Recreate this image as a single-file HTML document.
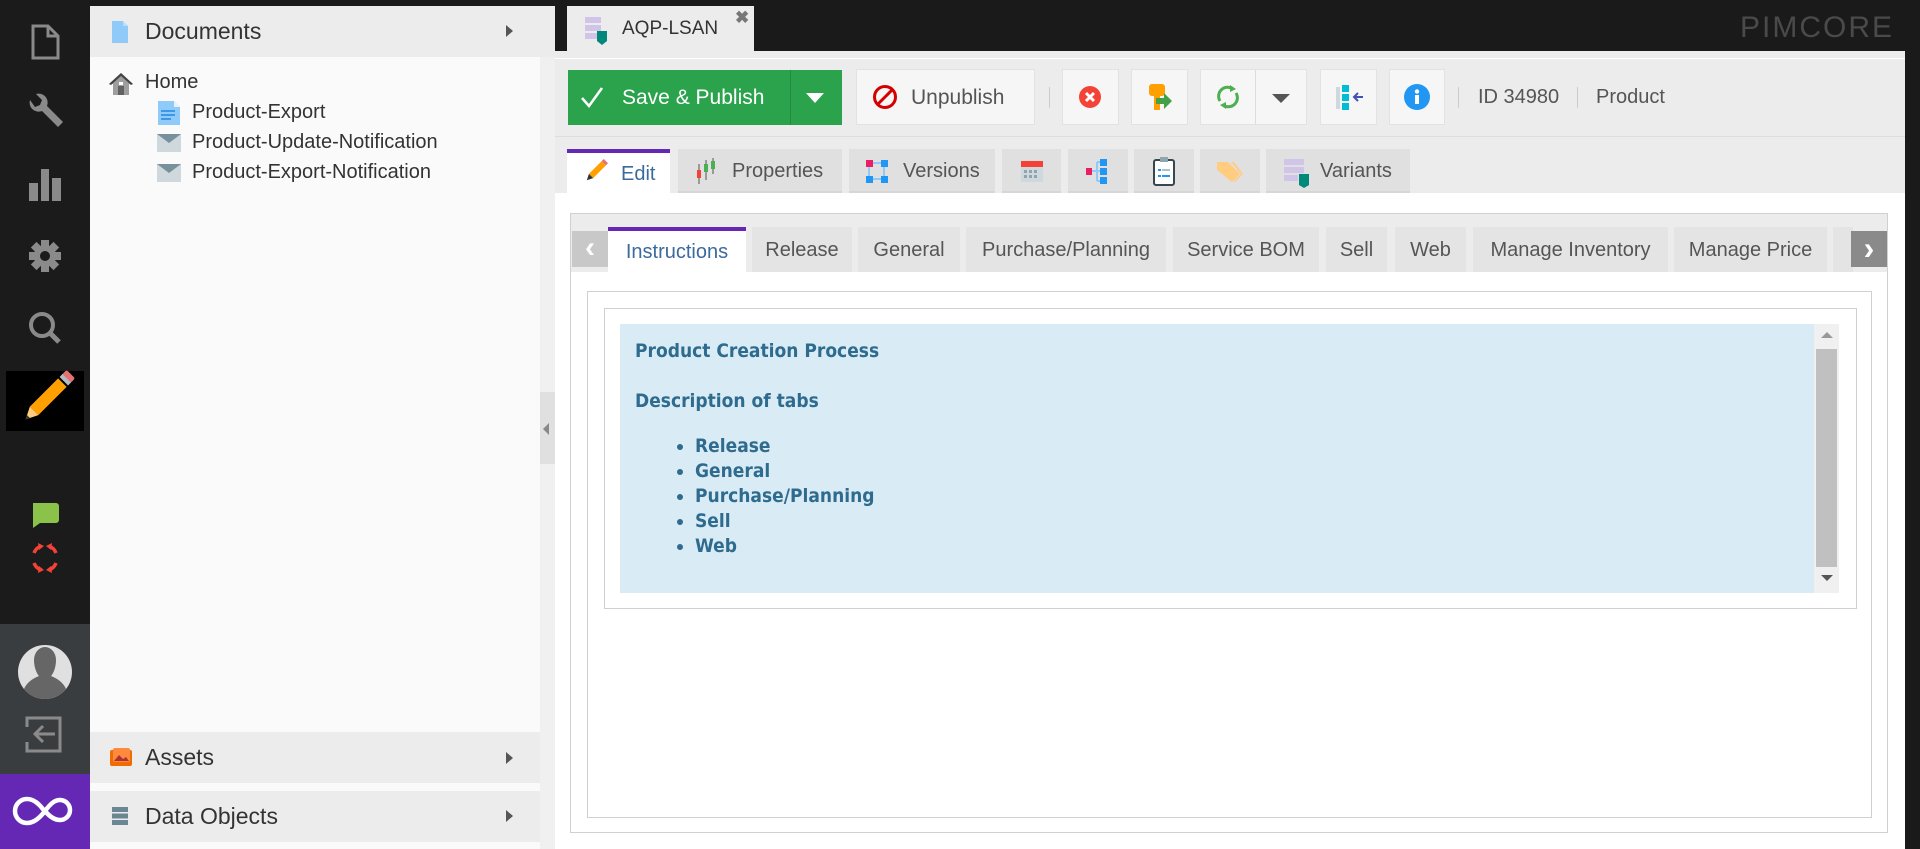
<!DOCTYPE html>
<html><head><meta charset="utf-8"><style>
*{box-sizing:border-box;margin:0;padding:0}
body{width:1920px;height:849px;overflow:hidden;background:#1a1a1a;font-family:"Liberation Sans",sans-serif;color:#333;position:relative}
.a{position:absolute}
.rail{left:0;top:0;width:90px;height:849px;background:#1b1b1b}
.hdr{background:#ececec;font-size:23px;color:#333}
.tree{font-size:20px;color:#333}
.btn{position:absolute;background:#f6f6f6;border:1px solid #e2e2e2;top:69px;height:56px}
.tab{position:absolute;top:149px;height:44px;background:#e0e0e0;font-size:20px;color:#555;line-height:44px;border-bottom:2px solid #d6d6d6}
.itab{position:absolute;top:227px;height:45px;background:#e4e4e4;font-size:20px;color:#555;line-height:46px;text-align:center}
.blue{color:#2e6b8e;font-family:"DejaVu Sans Condensed","Liberation Sans",sans-serif;font-weight:bold;font-size:19px}
</style></head><body>
<div class="a rail"></div>
<svg class="a" style="left:0;top:0" width="90" height="849">
<g fill="none" stroke="#8a8a8a" stroke-width="3"><path d="M33 26h15l10 10v22H33z M48 26v10h10"/></g>
<path d="M30 100a9 9 0 0 0 12 11l16 16 5-5-16-16a9 9 0 0 0-11-12l6 6-2 5-5 2z" fill="#8a8a8a"/>
<g fill="#8a8a8a"><rect x="29" y="183" width="9" height="18"/><rect x="41" y="169" width="8" height="32"/><rect x="52" y="178" width="9" height="23"/></g>
<g transform="translate(45 256)"><circle r="11" fill="#8a8a8a"/><g fill="#8a8a8a"><rect x="-4" y="-16" width="8" height="32"/><rect x="-4" y="-16" width="8" height="32" transform="rotate(45)"/><rect x="-4" y="-16" width="8" height="32" transform="rotate(90)"/><rect x="-4" y="-16" width="8" height="32" transform="rotate(135)"/></g><circle r="5" fill="#1b1b1b"/></g>
<circle cx="42" cy="325" r="11" fill="none" stroke="#8a8a8a" stroke-width="4"/><path d="M50 333l9 9" stroke="#8a8a8a" stroke-width="5"/>
<rect x="6" y="371" width="78" height="60" fill="#000"/>
<g transform="translate(44 401) rotate(45)"><rect x="-6" y="-26" width="12" height="40" fill="#ff9f00"/><rect x="-6" y="-33" width="12" height="5" fill="#b0bec5"/><rect x="-6" y="-38" width="12" height="6" rx="2" fill="#e57373"/><path d="M-6 14h12l-6 12z" fill="#ffcc80"/><path d="M-2 22h4l-2 4z" fill="#333"/></g>
<path d="M33 503h23a3 3 0 0 1 3 3v14a3 3 0 0 1-3 3H40l-7 5z" fill="#8bc34a"/>
<g fill="none" stroke="#f44336" stroke-width="3.5"><path d="M41 546a12 12 0 0 0-7 7M49 546a12 12 0 0 1 7 7M41 570a12 12 0 0 1-7-7M49 570a12 12 0 0 0 7-7"/></g>
<g fill="#f44336"><path d="M38 543l6 3-5 4z M52 543l-6 3 5 4z M38 573l6-3-5-4z M52 573l-6-3 5-4z"/></g>
<rect x="0" y="624" width="90" height="150" fill="#3a3d40"/>
<circle cx="45" cy="672" r="27" fill="#e0e0e0"/>
<path d="M34 660a11 13 0 0 1 22 0c0 8-3 14-5 16 8 3 13 8 15 13a27 27 0 0 1-42 0c2-5 7-10 15-13-2-2-5-8-5-16z" fill="#666"/>
<g fill="none" stroke="#8a8a8a" stroke-width="3"><path d="M27 727v-9h33v33H27v-9"/><path d="M55 734H36m7-8-8 8 8 8"/></g>
<rect x="0" y="774" width="90" height="75" fill="#6428b4"/>
<path d="M45 812c-6-9-12-13-18-13a12 12 0 0 0 0 24c6 0 12-4 18-12s10-11 15-11a10 10 0 0 1 0 20c-5 0-10-3-15-9" fill="none" stroke="#fff" stroke-width="4.5"/>
</svg>
<div class="a" style="left:114px;top:534px;width:184px;height:45px;background:#333;border-radius:6px;color:#fff;font-size:19px;line-height:45px;padding-left:14px">Update Available</div>
<div class="a" style="left:103px;top:547px;border-right:11px solid #333;border-top:10px solid transparent;border-bottom:10px solid transparent"></div>
<div class="a" style="left:90px;top:6px;width:465px;height:843px;background:#fafafa"></div>
<div class="a hdr" style="left:90px;top:6px;width:465px;height:51px;line-height:51px;padding-left:55px">Documents</div>
<svg class="a" style="left:110px;top:20px" width="20" height="24"><path d="M2 1h11l5 5v17H2z" fill="#90caf9"/><path d="M13 1v5h5" fill="#bbdefb"/></svg>
<div class="a" style="left:506px;top:25px;border-left:7px solid #555;border-top:6px solid transparent;border-bottom:6px solid transparent"></div>
<svg class="a" style="left:108px;top:71px" width="26" height="26"><path d="M13 2 1 13h4v11h16V13h4z" fill="#9e9e9e"/><path d="M13 2 1 13l2 1 10-9 10 9 2-1z" fill="#444"/><rect x="10" y="15" width="6" height="9" fill="#616161"/><rect x="11" y="11" width="4" height="3" fill="#fff"/></svg>
<div class="a tree" style="left:145px;top:71px">Home</div>
<svg class="a" style="left:157px;top:101px" width="24" height="24"><path d="M1 0h16l6 6v18H1z" fill="#90caf9"/><path d="M17 0v6h6" fill="#e3f2fd"/><g stroke="#1e88e5" stroke-width="1.5"><path d="M4 10h14M4 14h14M4 18h10"/></g></svg>
<div class="a tree" style="left:192px;top:101px">Product-Export</div>
<svg class="a" style="left:157px;top:134px" width="24" height="18"><rect width="24" height="18" fill="#cfd8dc"/><path d="M0 0h24L12 9z" fill="#78909c"/></svg>
<div class="a tree" style="left:192px;top:131px">Product-Update-Notification</div>
<svg class="a" style="left:157px;top:164px" width="24" height="18"><rect width="24" height="18" fill="#cfd8dc"/><path d="M0 0h24L12 9z" fill="#78909c"/></svg>
<div class="a tree" style="left:192px;top:161px">Product-Export-Notification</div>
<div class="a" style="left:540px;top:57px;width:15px;height:792px;background:#f0f0f0"></div>
<div class="a" style="left:540px;top:392px;width:15px;height:72px;background:#e0e0e0"></div>
<div class="a" style="left:543px;top:423px;border-right:6px solid #888;border-top:6px solid transparent;border-bottom:6px solid transparent"></div>
<div class="a hdr" style="left:90px;top:732px;width:450px;height:51px;line-height:51px;padding-left:55px">Assets</div>
<svg class="a" style="left:110px;top:748px" width="22" height="18"><rect y="2" width="22" height="16" rx="2" fill="#ef6c00"/><rect x="3" width="17" height="14" rx="2" fill="#ff8a3d"/><path d="M4 13l5-6 4 4 3-2 3 4z" fill="#a33"/></svg>
<div class="a" style="left:506px;top:752px;border-left:7px solid #555;border-top:6px solid transparent;border-bottom:6px solid transparent"></div>
<div class="a hdr" style="left:90px;top:791px;width:450px;height:51px;line-height:51px;padding-left:55px">Data Objects</div>
<svg class="a" style="left:112px;top:807px" width="16" height="18"><g fill="#6b8793"><rect width="16" height="5"/><rect y="6.5" width="16" height="5"/><rect y="13" width="16" height="5"/></g></svg>
<div class="a" style="left:506px;top:810px;border-left:7px solid #555;border-top:6px solid transparent;border-bottom:6px solid transparent"></div>
<div class="a" style="left:567px;top:6px;width:187px;height:45px;background:#ececec;font-size:19px;line-height:45px;padding-left:55px;color:#333">AQP-LSAN</div>
<svg class="a" style="left:585px;top:17px" width="24" height="28"><g fill="#d1c4e9"><rect width="16" height="6"/><rect y="8" width="16" height="6"/><rect y="16" width="16" height="6"/></g><path d="M12 14h10v10l-5 4-5-4z" fill="#00897b"/></svg>
<div class="a" style="left:735px;top:8px;font-size:17px;color:#777;font-weight:bold">✖</div>
<div class="a" style="left:1740px;top:11px;font-size:30px;letter-spacing:2px;color:#4a4a4a">PIMCORE</div>
<div class="a" style="left:555px;top:51px;width:1350px;height:798px;background:#ececec"></div>
<div class="a" style="left:555px;top:58px;width:1350px;height:1px;background:#fff"></div>
<div class="a" style="left:555px;top:136px;width:1350px;height:1px;background:#ddd"></div>
<div class="a" style="left:568px;top:70px;width:274px;height:55px;background:#2ba24c;color:#fff;font-size:21px;line-height:55px;padding-left:54px">Save &amp; Publish</div>
<svg class="a" style="left:580px;top:86px" width="24" height="22"><path d="M2 12l7 8L22 2" fill="none" stroke="#fff" stroke-width="2.5"/></svg>
<div class="a" style="left:790px;top:70px;width:1px;height:55px;background:#238a40"></div>
<div class="a" style="left:806px;top:93px;border-top:10px solid #fff;border-left:9px solid transparent;border-right:9px solid transparent"></div>
<div class="btn" style="left:856px;width:179px;font-size:21px;line-height:56px;padding-left:54px;color:#555">Unpublish</div>
<svg class="a" style="left:872px;top:84px" width="26" height="26"><circle cx="13" cy="13" r="10.5" fill="none" stroke="#d50000" stroke-width="3"/><path d="M6 20 20 6" stroke="#d50000" stroke-width="3"/></svg>
<div class="a" style="left:1049px;top:87px;width:1px;height:21px;background:#ccc"></div>
<div class="btn" style="left:1062px;width:57px"></div>
<svg class="a" style="left:1078px;top:85px" width="24" height="24"><circle cx="12" cy="12" r="11" fill="#f44336"/><path d="M8 8l8 8M16 8l-8 8" stroke="#fff" stroke-width="3"/></svg>
<div class="btn" style="left:1131px;width:57px"></div>
<svg class="a" style="left:1148px;top:84px" width="26" height="28"><rect x="1" y="0" width="16" height="12" rx="3" fill="#ffa000"/><rect x="6" y="10" width="6" height="16" fill="#ffa000"/><path d="M8 14h8v-5l8 8-8 8v-5H8z" fill="#43a047"/></svg>
<div class="btn" style="left:1200px;width:107px"></div>
<div class="a" style="left:1255px;top:70px;width:1px;height:55px;background:#ddd"></div>
<svg class="a" style="left:1215px;top:84px" width="26" height="26"><g fill="none" stroke="#4caf50" stroke-width="3"><path d="M5 17A9 9 0 0 1 18 5"/><path d="M21 9A9 9 0 0 1 8 21"/></g><path d="M15 1l6 4-6 3z M11 25l-6-4 6-3z" fill="#4caf50"/></svg>
<div class="a" style="left:1272px;top:94px;border-top:9px solid #555;border-left:9px solid transparent;border-right:9px solid transparent"></div>
<div class="btn" style="left:1320px;width:57px"></div>
<svg class="a" style="left:1336px;top:85px" width="28" height="26"><rect x="0" y="2" width="4" height="22" fill="#cfd8dc"/><g fill="#00bcd4"><rect x="6" y="0" width="7" height="7"/><rect x="6" y="9" width="7" height="7"/><rect x="6" y="18" width="7" height="7"/></g><path d="M27 12H18m4-4-4 4 4 4" stroke="#3f51b5" stroke-width="2" fill="none"/></svg>
<div class="btn" style="left:1389px;width:56px"></div>
<svg class="a" style="left:1404px;top:84px" width="26" height="26"><circle cx="13" cy="13" r="13" fill="#2196f3"/><rect x="11" y="11" width="4" height="9" fill="#fff"/><circle cx="13" cy="7.5" r="2.2" fill="#fff"/></svg>
<div class="a" style="left:1458px;top:87px;width:1px;height:21px;background:#ccc"></div>
<div class="a" style="left:1478px;top:86px;font-size:20px;color:#555">ID 34980</div>
<div class="a" style="left:1577px;top:87px;width:1px;height:21px;background:#ccc"></div>
<div class="a" style="left:1596px;top:86px;font-size:20px;color:#555">Product</div>
<div class="tab" style="left:567px;width:103px;background:#fff;border-top:4px solid #6428b4;border-bottom:none;line-height:42px;padding-left:54px;color:#3b6a9c">Edit</div>
<svg class="a" style="left:583px;top:158px" width="26" height="26"><g transform="translate(13 13) rotate(45)"><rect x="-3" y="-11" width="6" height="18" fill="#ff9f00"/><rect x="-3" y="-14" width="6" height="3" fill="#e57373"/><path d="M-3 7h6l-3 6z" fill="#333"/></g></svg>
<div class="tab" style="left:678px;width:164px;padding-left:54px">Properties</div>
<svg class="a" style="left:694px;top:158px" width="24" height="26"><g stroke="#555"><path d="M5 6v20M12 2v20M19 0v16"/></g><rect x="3" y="12" width="4" height="8" fill="#f44336"/><rect x="10" y="6" width="4" height="8" fill="#4caf50"/><rect x="17" y="3" width="4" height="8" fill="#4caf50"/></svg>
<div class="tab" style="left:849px;width:146px;padding-left:54px">Versions</div>
<svg class="a" style="left:866px;top:160px" width="24" height="24"><rect x="0" y="0" width="7" height="7" fill="#e91e63"/><rect x="15" y="0" width="7" height="7" fill="#2196f3"/><rect x="0" y="16" width="7" height="7" fill="#2196f3"/><rect x="15" y="16" width="7" height="7" fill="#2196f3"/><path d="M7 3h8M3 7v9M18 7v9M7 19h8" stroke="#90caf9" stroke-width="2"/></svg>
<div class="tab" style="left:1002px;width:59px"></div>
<svg class="a" style="left:1021px;top:159px" width="22" height="24"><rect x="0" y="2" width="22" height="21" rx="2" fill="#cfd8dc"/><rect x="0" y="2" width="22" height="6" fill="#f44336"/><g fill="#90a4ae"><rect x="3" y="11" width="3" height="3"/><rect x="8" y="11" width="3" height="3"/><rect x="13" y="11" width="3" height="3"/><rect x="3" y="16" width="3" height="3"/><rect x="8" y="16" width="3" height="3"/><rect x="13" y="16" width="3" height="3"/></g></svg>
<div class="tab" style="left:1068px;width:60px"></div>
<svg class="a" style="left:1086px;top:159px" width="24" height="26"><rect x="0" y="9" width="6" height="7" fill="#e91e63"/><g fill="#2196f3"><rect x="14" y="0" width="7" height="7"/><rect x="14" y="9" width="7" height="7"/><rect x="14" y="18" width="7" height="7"/></g><path d="M6 12h5M11 3v19M11 3h3M11 12h3M11 22h3" stroke="#90caf9" stroke-width="2" fill="none"/></svg>
<div class="tab" style="left:1134px;width:60px"></div>
<svg class="a" style="left:1153px;top:156px" width="22" height="30"><rect x="1" y="4" width="20" height="25" rx="2" fill="#fff" stroke="#37474f" stroke-width="2"/><rect x="7" y="1" width="8" height="5" fill="#90a4ae"/><g fill="#2196f3"><rect x="5" y="13" width="3" height="2"/><rect x="5" y="19" width="3" height="2"/><rect x="9" y="19" width="8" height="2"/></g><rect x="9" y="13" width="8" height="2" fill="#b0bec5"/></svg>
<div class="tab" style="left:1200px;width:60px"></div>
<svg class="a" style="left:1216px;top:160px" width="28" height="24"><path d="M1 2h11l12 12-8 8L1 10z" fill="#ffcc80"/><path d="M15 2h3l9 12-8 8-1-1 7-7z" fill="#ffcc80"/></svg>
<div class="tab" style="left:1266px;width:144px;padding-left:54px">Variants</div>
<svg class="a" style="left:1284px;top:159px" width="26" height="30"><g fill="#d1c4e9"><rect width="20" height="6"/><rect y="8" width="20" height="6"/><rect y="16" width="14" height="6"/></g><path d="M15 15h10v11l-5 3-5-3z" fill="#00897b"/></svg>
<div class="a" style="left:555px;top:193px;width:1350px;height:656px;background:#fff"></div>
<div class="a" style="left:570px;top:213px;width:1318px;height:620px;border:1px solid #d0d0d0;background:#fff"></div>
<div class="a" style="left:571px;top:214px;width:1316px;height:58px;background:#ececec"></div>
<div class="a" style="left:572px;top:231px;width:36px;height:36px;background:#c8c8c8;color:#fff;font-size:30px;line-height:34px;text-align:center;font-weight:bold">‹</div>
<div class="itab" style="left:608px;width:138px;background:#fff;border-top:4px solid #6428b4;line-height:42px;color:#3b6a9c">Instructions</div>
<div class="itab" style="left:752px;width:100px">Release</div>
<div class="itab" style="left:858px;width:102px">General</div>
<div class="itab" style="left:966px;width:200px">Purchase/Planning</div>
<div class="itab" style="left:1173px;width:146px">Service BOM</div>
<div class="itab" style="left:1326px;width:61px">Sell</div>
<div class="itab" style="left:1395px;width:71px">Web</div>
<div class="itab" style="left:1473px;width:195px">Manage Inventory</div>
<div class="itab" style="left:1674px;width:153px">Manage Price</div>
<div class="itab" style="left:1833px;width:20px"></div>
<div class="a" style="left:1851px;top:231px;width:36px;height:36px;background:#8a8a8a;color:#fff;font-size:32px;line-height:34px;text-align:center;font-weight:bold">›</div>
<div class="a" style="left:587px;top:291px;width:1285px;height:527px;border:1px solid #d0d0d0"></div>
<div class="a" style="left:604px;top:308px;width:1253px;height:301px;border:1px solid #d0d0d0"></div>
<div class="a" style="left:620px;top:324px;width:1194px;height:269px;background:#d9ecf5"></div>
<div class="a" style="left:1814px;top:324px;width:25px;height:269px;background:#f0f0f0"></div>
<div class="a" style="left:1816px;top:349px;width:21px;height:218px;background:#c0c0c0"></div>
<div class="a" style="left:1821px;top:332px;border-bottom:6px solid #999;border-left:6px solid transparent;border-right:6px solid transparent"></div>
<div class="a" style="left:1821px;top:575px;border-top:6px solid #555;border-left:6px solid transparent;border-right:6px solid transparent"></div>
<div class="a blue" style="left:635px;top:340px">Product Creation Process</div>
<div class="a blue" style="left:635px;top:390px">Description of tabs</div>
<ul class="a blue" style="left:695px;top:434px;line-height:25px;list-style:disc">
<li>Release</li><li>General</li><li>Purchase/Planning</li><li>Sell</li><li>Web</li></ul>
</body></html>
